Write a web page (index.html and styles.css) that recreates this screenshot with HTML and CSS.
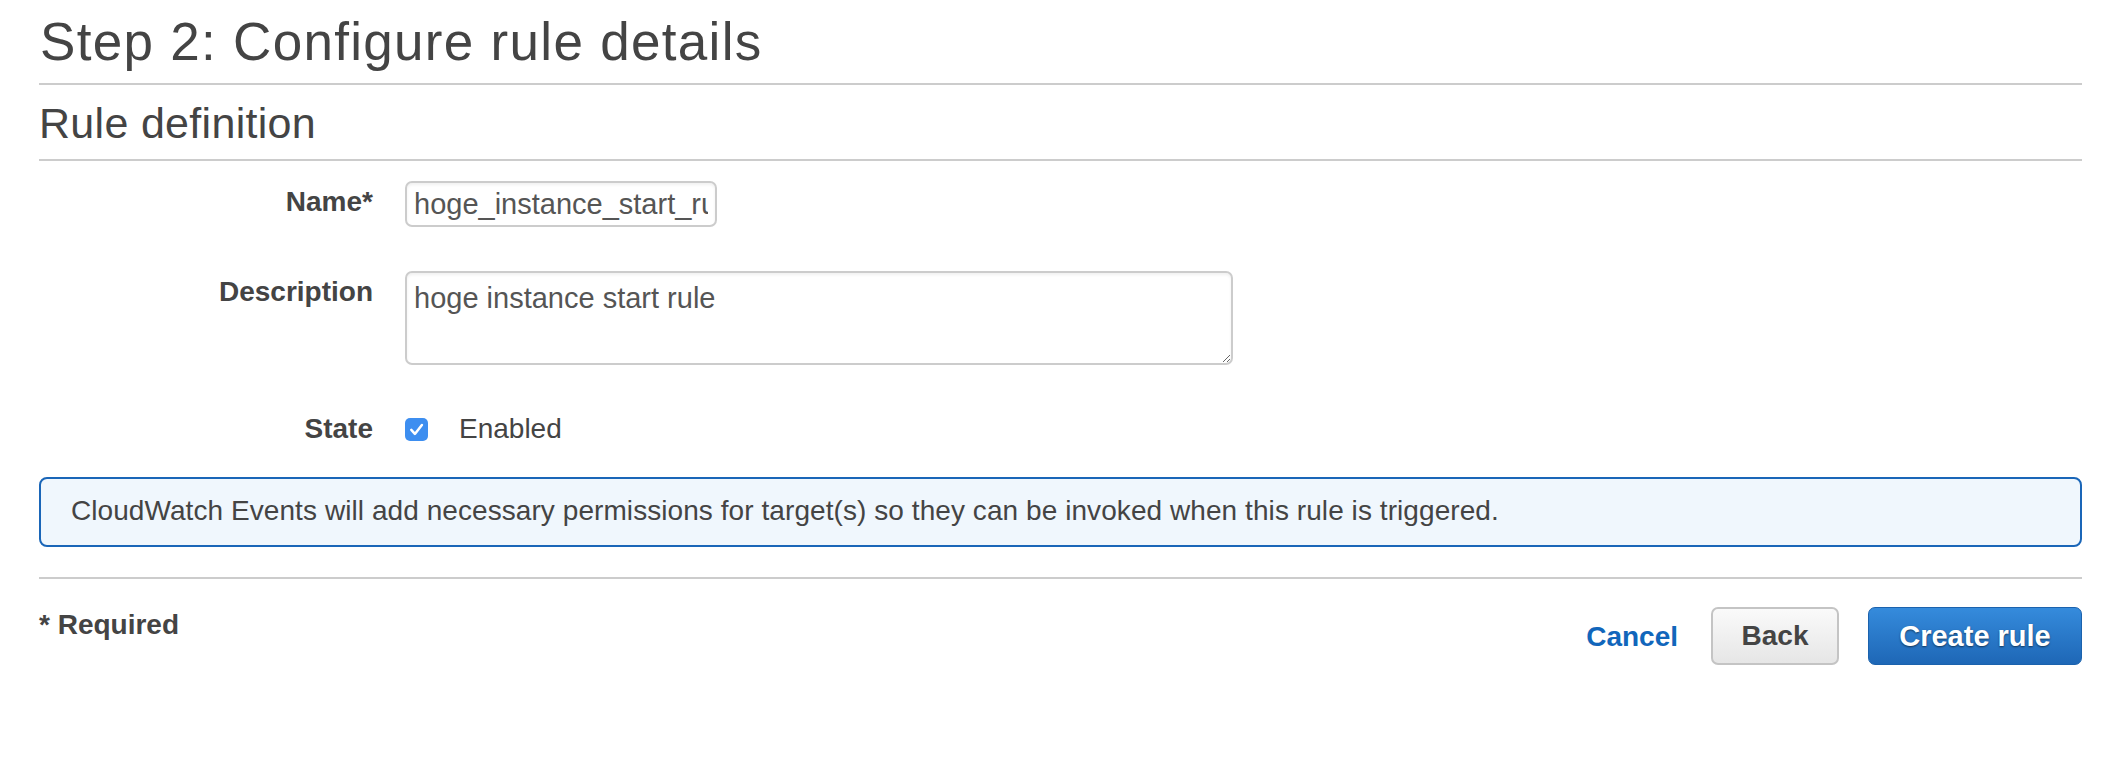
FILE: index.html
```html
<!DOCTYPE html>
<html lang="en">
<head>
<meta charset="utf-8">
<title>Step 2: Configure rule details</title>
<link rel="stylesheet" href="styles.css">
</head>
<body>
<div class="page">
  <h1 class="page-title">Step 2: Configure rule details</h1>
  <hr class="divider">
  <h2 class="section-title">Rule definition</h2>
  <hr class="divider">

  <div class="form-row row-name">
    <label class="field-label" for="rule-name">Name*</label>
    <input class="text-input" id="rule-name" type="text" value="hoge_instance_start_rule">
  </div>

  <div class="form-row row-desc">
    <label class="field-label" for="rule-desc">Description</label>
    <textarea class="text-area" id="rule-desc">hoge instance start rule</textarea>
  </div>

  <div class="form-row row-state">
    <span class="field-label state-label">State</span>
    <div class="state-control">
      <span class="checkbox" aria-checked="true" role="checkbox">
        <svg viewBox="0 0 23 23" width="23" height="23" aria-hidden="true">
          <path d="M6.3 11.9 L9.9 15.9 L16.9 7" fill="none" stroke="#ffffff" stroke-width="2.5" stroke-linecap="round" stroke-linejoin="round"/>
        </svg>
      </span>
      <span class="state-text">Enabled</span>
    </div>
  </div>

  <div class="info-box">CloudWatch Events will add necessary permissions for target(s) so they can be invoked when this rule is triggered.</div>

  <hr class="divider divider-footer">

  <div class="footer">
    <span class="required-note">* Required</span>
    <div class="actions">
      <a class="link-cancel" href="#">Cancel</a>
      <button class="btn btn-back" type="button">Back</button>
      <button class="btn btn-primary" type="button">Create rule</button>
    </div>
  </div>
</div>
</body>
</html>
```

FILE: styles.css
```css
html, body {
  margin: 0;
  padding: 0;
  background: #ffffff;
}

body {
  font-family: "Liberation Sans", Arial, Helvetica, sans-serif;
  color: #444444;
  font-size: 28px;
  line-height: 32px;
}

.page {
  padding: 12px 26px 0 39px;
}

.page-title {
  margin: 0;
  font-size: 53px;
  line-height: 60px;
  font-weight: normal;
  letter-spacing: 1.3px;
  color: #444444;
  padding-left: 1px;
}

.divider {
  margin: 11px 0 0 0;
  border: 0;
  border-top: 2px solid #cccccc;
  height: 0;
}

.section-title {
  margin: 13px 0 0 0;
  font-size: 43px;
  line-height: 50px;
  font-weight: normal;
  letter-spacing: 0.3px;
  color: #444444;
}

.section-title + .divider {
  margin-top: 11px;
}

.form-row {
  display: flex;
  align-items: flex-start;
}

.row-name {
  margin-top: 20px;
}

.row-desc {
  margin-top: 44px;
}

.row-state {
  margin-top: 48px;
  align-items: center;
}

.field-label {
  width: 334px;
  flex: none;
  margin-right: 32px;
  padding-top: 5px;
  text-align: right;
  font-weight: bold;
  color: #444444;
}

.state-label {
  padding-top: 0;
}

.text-input,
.text-area {
  box-sizing: border-box;
  font-family: "Liberation Sans", Arial, Helvetica, sans-serif;
  font-size: 29px;
  color: #555555;
  border: 2px solid #cccccc;
  border-radius: 7px;
  background: #ffffff;
  box-shadow: inset 0 2px 3px rgba(0, 0, 0, 0.06);
  outline: none;
  margin: 0;
}

.text-input {
  width: 312px;
  height: 46px;
  padding: 0 7px;
  line-height: 42px;
}

.text-area {
  width: 828px;
  height: 94px;
  padding: 9px 7px 7px 7px;
  line-height: 32px;
  resize: both;
}

.state-control {
  display: flex;
  align-items: center;
}

.checkbox {
  display: inline-flex;
  width: 23px;
  height: 23px;
  border-radius: 5px;
  background: #3d8ef0;
  margin-right: 31px;
}

.checkbox svg {
  display: block;
}

.state-text {
  color: #444444;
}

.info-box {
  margin-top: 32px;
  border: 2px solid #1a66b8;
  border-radius: 8px;
  background: #f0f7fd;
  padding: 16px 30px 18px 30px;
  color: #444444;
  letter-spacing: 0.07px;
}

.divider-footer {
  margin-top: 30px;
}

.footer {
  margin-top: 28px;
  display: flex;
  justify-content: space-between;
  align-items: flex-start;
}

.required-note {
  font-weight: bold;
  color: #444444;
  padding-top: 2px;
}

.actions {
  display: flex;
  align-items: center;
}

.link-cancel {
  color: #1166bb;
  font-weight: bold;
  text-decoration: none;
  margin-right: 33px;
  padding-top: 2px;
}

.btn {
  box-sizing: border-box;
  height: 58px;
  font-family: "Liberation Sans", Arial, Helvetica, sans-serif;
  font-size: 28px;
  font-weight: bold;
  border-radius: 7px;
  cursor: pointer;
  margin: 0;
}

.btn-back {
  width: 128px;
  color: #444444;
  border: 2px solid #c4c4c4;
  background: linear-gradient(to bottom, #fafafa 0%, #e6e6e6 100%);
  margin-right: 29px;
}

.btn-primary {
  width: 214px;
  color: #ffffff;
  font-size: 29px;
  border: 1px solid #1b62ad;
  background: linear-gradient(to bottom, #358bdc 0%, #1e67b6 100%);
  text-shadow: 0 1px 2px rgba(0, 0, 0, 0.55);
}
```
